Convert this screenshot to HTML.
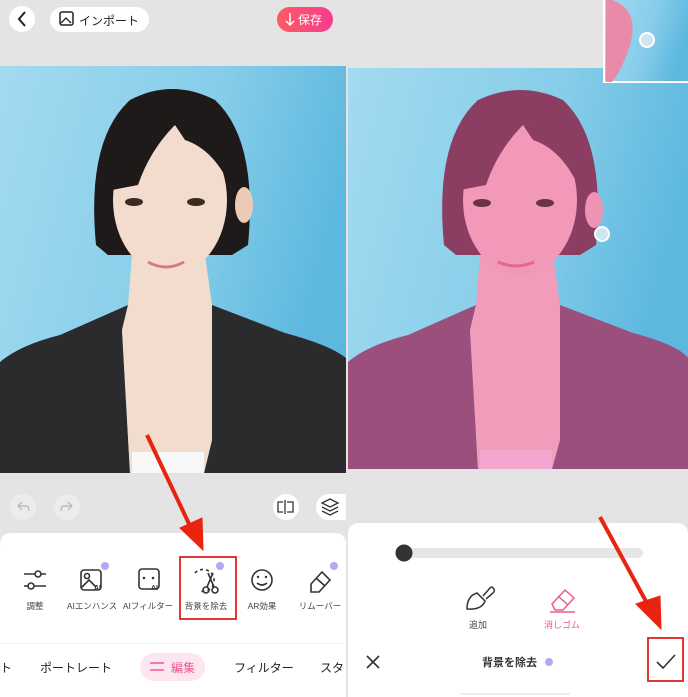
<!DOCTYPE html>
<html><head><meta charset="utf-8"><style>
html,body{margin:0;padding:0;width:688px;height:697px;overflow:hidden;background:#e4e4e4;font-family:"Liberation Sans","Noto Sans CJK JP",sans-serif;}
</style></head><body>
<svg width="688" height="697" viewBox="0 0 688 697" xmlns="http://www.w3.org/2000/svg" style="position:absolute;left:0;top:0" font-family="Liberation Sans, Noto Sans CJK JP, sans-serif">
<defs>
<linearGradient id="bg" x1="0" y1="0" x2="1" y2="0.3"><stop offset="0" stop-color="#a3daf0"/><stop offset="0.6" stop-color="#86cde9"/><stop offset="1" stop-color="#5db8df"/></linearGradient>
<linearGradient id="sv" x1="0" x2="1"><stop offset="0" stop-color="#ff5a62"/><stop offset="1" stop-color="#f53d8f"/></linearGradient>
<clipPath id="lc"><rect x="0" y="0" width="346" height="697"/></clipPath>
</defs>
<rect width="688" height="697" fill="#e4e4e4"/>
<!-- LEFT PHOTO -->
<rect x="0" y="66" width="346" height="407" fill="url(#bg)"/>
<g>
<path d="M0 473 L0 362 Q20 345 60 335 L128 305 L122 330 L130 473Z" fill="#2b2b2e"/>
<path d="M212 305 L285 333 Q330 345 346 358 L346 473 L204 473 L212 440 Z" fill="#2b2b2e"/>
<path d="M132 255 L205 255 L212 305 L212 440 L204 473 L130 473 L122 330 L128 305Z" fill="#f2dccd"/>
<rect x="132" y="452" width="72" height="21" fill="#f8f8f8"/>
<path d="M96 245 Q86 140 130 100 Q172 78 215 100 Q258 140 248 245 L232 255 L108 255Z" fill="#1e1a1a"/>
<ellipse cx="244" cy="205" rx="9" ry="18" fill="#eccbb6"/>
<ellipse cx="170" cy="200" rx="57" ry="75" fill="#f3dccd"/>
<path d="M112 190 Q120 120 175 125 Q150 150 138 185Z" fill="#1e1a1a"/>
<path d="M175 125 Q225 130 232 190 Q215 150 185 140Z" fill="#1e1a1a"/>
<ellipse cx="134" cy="202" rx="9" ry="4" fill="#3a2a22"/>
<ellipse cx="196" cy="202" rx="9" ry="4" fill="#3a2a22"/>
<path d="M148 262 Q166 272 184 262" fill="none" stroke="#d87a80" stroke-width="3"/>
</g>
<!-- RIGHT PHOTO -->
<rect x="348" y="68" width="340" height="401" fill="url(#bg)"/>
<g transform="translate(348,0)">
<path d="M0 469 L0 362 Q20 345 60 335 L128 305 L122 330 L130 469Z" fill="#9a4f7c"/>
<path d="M212 305 L285 333 Q330 345 340 358 L340 469 L204 469 L212 440Z" fill="#9a4f7c"/>
<path d="M132 255 L205 255 L212 305 L212 440 L204 469 L130 469 L122 330 L128 305Z" fill="#f29cbc"/>
<rect x="132" y="450" width="72" height="19" fill="#f3a6cf"/>
<path d="M96 245 Q86 140 130 100 Q172 80 215 100 Q258 140 248 245 L232 255 L108 255Z" fill="#8b3e62"/>
<ellipse cx="246" cy="210" rx="9" ry="18" fill="#ee93b2"/>
<ellipse cx="172" cy="200" rx="57" ry="75" fill="#f298b8"/>
<path d="M112 190 Q120 120 175 125 Q150 150 138 185Z" fill="#8b3e62"/>
<path d="M175 125 Q225 130 232 190 Q215 150 185 140Z" fill="#8b3e62"/>
<ellipse cx="134" cy="203" rx="9" ry="4" fill="#6a3448"/>
<ellipse cx="197" cy="203" rx="9" ry="4" fill="#6a3448"/>
<path d="M150 262 Q168 270 186 262" fill="none" stroke="#e26890" stroke-width="3"/>
</g>
<circle cx="602" cy="234" r="7" fill="#cfe6f0" stroke="#fff" stroke-width="2"/>
<!-- thumbnail -->
<rect x="604" y="-2" width="86" height="84" fill="url(#bg)" stroke="#fff" stroke-width="2"/>
<path d="M612 0 Q640 10 630 45 Q622 70 612 82 L606 82 L606 0Z" fill="#e88aa8"/>
<circle cx="647" cy="40" r="7" fill="#cfe6f0" stroke="#fff" stroke-width="2"/>
<!-- top bar -->
<circle cx="22" cy="19" r="13" fill="#fff"/>
<path d="M25 12 L19 19 L25 26" fill="none" stroke="#222" stroke-width="2"/>
<rect x="50" y="7" width="99" height="25" rx="12.5" fill="#fff"/>
<rect x="60" y="12" width="13" height="13" rx="2" fill="none" stroke="#222" stroke-width="1.5"/>
<path d="M61 23 L66 18 L71 23" fill="none" stroke="#222" stroke-width="1.3"/>
<text x="79" y="25" font-size="12" fill="#222">インポート</text>
<rect x="277" y="7" width="56" height="25" rx="12.5" fill="url(#sv)"/>
<path d="M290 13 L290 25 M286 21 L290 25 L294 21" fill="none" stroke="#fff" stroke-width="1.5"/>
<text x="298" y="24" font-size="12" fill="#fff">保存</text>
<!-- left toolbar -->
<g clip-path="url(#lc)">
<circle cx="23" cy="507" r="13" fill="#ececec"/><path d="M18 506 L22 502 M18 506 L22 510 M18 506 L26 506 Q29 506 29 511" fill="none" stroke="#bbb" stroke-width="1.4"/>
<circle cx="67" cy="507" r="13" fill="#ececec"/><path d="M72 506 L68 502 M72 506 L68 510 M72 506 L64 506 Q61 506 61 511" fill="none" stroke="#bbb" stroke-width="1.4"/>
<circle cx="286" cy="507" r="13" fill="#fff"/>
<path d="M285 500 L285 514 M283 502 L278 502 L278 512 L283 512 M287 502 L293 502 L293 512 L287 512" fill="none" stroke="#333" stroke-width="1.3"/>
<rect x="316" y="494" width="40" height="26" rx="13" fill="#fff"/>
<path d="M322 503 L330 499 L338 503 L330 507Z M322 507 L330 511 L338 507 M322 511 L330 515 L338 511" fill="none" stroke="#333" stroke-width="1.3"/>
</g>
<!-- left panel -->
<path d="M0 545 Q0 533 12 533 L334 533 Q346 533 346 545 L346 697 L0 697Z" fill="#fff"/>
<rect x="0" y="643" width="346" height="1" fill="#f2f2f2"/>
<g fill="none" stroke="#333" stroke-width="1.6">
<path d="M24 574 L46 574 M24 586 L46 586"/><circle cx="38" cy="574" r="3" fill="#fff"/><circle cx="31" cy="586" r="3" fill="#fff"/>
<rect x="81" y="570" width="20" height="20" rx="3"/><circle cx="87" cy="576" r="2.5"/><path d="M81 588 L89 580 L96 587"/>
<rect x="139" y="569" width="20" height="20" rx="3"/>
<path d="M195 573 A11 11 0 1 1 200 591" stroke-dasharray="3 3"/>
<circle cx="206" cy="590" r="3"/><circle cx="215" cy="590" r="3"/><path d="M207 587 L213 573 M214 587 L208 573"/>
<circle cx="262" cy="580" r="10"/><path d="M257 583 Q262 587 267 583"/>
<path d="M311 584 L322 572 L330 580 L319 592 L311 592Z M316 578 L325 586"/>
</g>
<text x="94" y="590" font-size="7" font-weight="bold" fill="#333">AI</text>
<text x="151" y="590" font-size="7" font-weight="bold" fill="#333">AI</text>
<circle cx="144" cy="578" r="1.3" fill="#333"/><circle cx="153" cy="578" r="1.3" fill="#333"/>
<circle cx="258" cy="577" r="1.2" fill="#333"/><circle cx="266" cy="577" r="1.2" fill="#333"/>
<circle cx="105" cy="566" r="4" fill="#b9a6f5"/><circle cx="220" cy="566" r="4" fill="#b9a6f5"/><circle cx="334" cy="566" r="4" fill="#b9a6f5"/>
<g font-size="8.5" fill="#444" text-anchor="middle">
<text x="35" y="609">調整</text><text x="92" y="609">AIエンハンス</text><text x="148" y="609">AIフィルター</text><text x="206" y="609">背景を除去</text><text x="262" y="609">AR効果</text><text x="320" y="609">リムーバー</text>
</g>
<rect x="180" y="557" width="56" height="62" fill="none" stroke="#e02020" stroke-width="1.8"/>
<rect x="140" y="653" width="65" height="28" rx="14" fill="#fde6f0"/>
<path d="M150 663 L164 663 M150 670 L164 670" stroke="#ec5a95" stroke-width="1.5"/>
<g font-size="12" fill="#222"><text x="0" y="672">ト</text><text x="40" y="672">ポートレート</text><text x="171" y="672" fill="#ec5a95">編集</text><text x="234" y="672">フィルター</text><text x="320" y="672">スタ</text></g>
<!-- right panel -->
<path d="M348 535 Q348 523 360 523 L676 523 Q688 523 688 535 L688 697 L348 697Z" fill="#fff"/>
<rect x="403" y="548" width="240" height="10" rx="5" fill="#e6e6e6"/>
<circle cx="404" cy="553" r="8.5" fill="#333"/>
<path d="M467 609 Q467 596 477 593 L485 601 Q482 610 467 609Z M483 596 L490 588 Q492 586 493 588 L494 589 Q495 591 493 593 L486 599" fill="none" stroke="#333" stroke-width="1.5"/>
<path d="M552 604 L565 590 L574 598 L563 610 L555 610Z M558 596 L568 605 M550 612 L575 612" fill="none" stroke="#ec5a95" stroke-width="1.5"/>
<text x="478" y="628" font-size="9" fill="#444" text-anchor="middle">追加</text>
<text x="562" y="628" font-size="9" fill="#ec5a95" text-anchor="middle">消しゴム</text>
<path d="M367 656 L379 668 M379 656 L367 668" stroke="#333" stroke-width="1.6"/>
<text x="482" y="666" font-size="11" font-weight="bold" fill="#333">背景を除去</text>
<circle cx="549" cy="662" r="4" fill="#b9a6f5"/>
<path d="M657 662 L663 668 L675 655" fill="none" stroke="#333" stroke-width="1.6"/>
<rect x="648" y="638" width="35" height="43" fill="none" stroke="#e02020" stroke-width="1.8"/>
<rect x="460" y="693" width="110" height="2" fill="#eee"/>
<!-- arrows -->
<g stroke="#e8230f" stroke-width="4" fill="#e8230f">
<line x1="147" y1="435" x2="191" y2="528"/>
<path d="M180 528 L203 550 L202 518Z" stroke-width="1"/>
<line x1="600" y1="517" x2="648" y2="605"/>
<path d="M636 604 L661 629 L660 596Z" stroke-width="1"/>
</g>
</svg>
</body></html>
